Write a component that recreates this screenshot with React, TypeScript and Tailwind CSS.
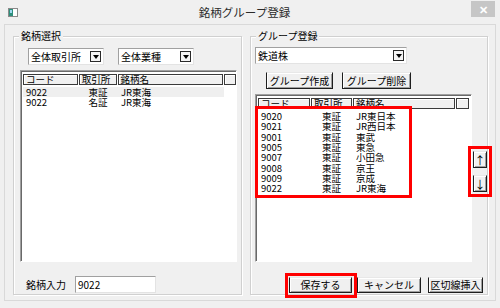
import type { ReactNode } from 'react'

// 銘柄グループ登録 dialog — classic Windows look: group boxes, sunken lists, 3D buttons.

type Row = { code: string; market: string; name: string }

const leftRows: Row[] = [
  { code: '9022', market: '東証', name: 'JR東海' },
  { code: '9022', market: '名証', name: 'JR東海' },
]

const groupRows: Row[] = [
  { code: '9020', market: '東証', name: 'JR東日本' },
  { code: '9021', market: '東証', name: 'JR西日本' },
  { code: '9001', market: '東証', name: '東武' },
  { code: '9005', market: '東証', name: '東急' },
  { code: '9007', market: '東証', name: '小田急' },
  { code: '9008', market: '東証', name: '京王' },
  { code: '9009', market: '東証', name: '京成' },
  { code: '9022', market: '東証', name: 'JR東海' },
]

function GroupBox({ label, className, children }: { label: string; className: string; children: ReactNode }) {
  return (
    <div className={`relative border border-[#d0d0d0] shadow-[inset_1px_1px_0_#fff,1px_1px_0_#fff] ${className}`}>
      <span className="absolute -top-[7px] left-[5px] bg-[#f0f0f0] px-[2px] text-[10px] leading-[12px] text-black">{label}</span>
      {children}
    </div>
  )
}

function Combo({ text, className }: { text: string; className: string }) {
  return (
    <div className={`shrink-0 h-[17px] bg-white border border-[#a0a0a0] border-b-[#e3e3e3] border-r-[#e3e3e3] flex items-center justify-between pl-[2px] pr-[2px] ${className}`}>
      <span className="text-[10px] leading-[12px] text-black">{text}</span>
      <span className="w-[11px] h-[11px] border border-[#2a2a2a] bg-[#f4f4f4] flex items-center justify-center">
        <span className="w-0 h-0 border-x-[3px] border-x-transparent border-t-[4px] border-t-black" />
      </span>
    </div>
  )
}

function WinButton({ children, className }: { children: ReactNode; className: string }) {
  return (
    <button className={`shrink-0 h-[16px] bg-[#f0f0f0] border border-[#1e1e1e] border-t-[#e8e8e8] shadow-[inset_1px_1px_0_#fff,inset_-1px_-1px_0_#a0a0a0] text-[10px] leading-[12px] text-black flex items-center justify-center ${className}`}>
      {children}
    </button>
  )
}

function HeaderCell({ text, className }: { text: string; className: string }) {
  return (
    <div className={`h-[11px] border border-[#3a3a3a] bg-[#f0f0f0] shadow-[inset_1px_1px_0_#fff] flex items-center pl-[2px] text-black ${className}`}>
      <span className="text-[9.5px] leading-[9px]">{text}</span>
    </div>
  )
}

function ListBox({ rows, widths, className, selected, children }: {
  rows: Row[]; widths: [string, string, string, string]; className: string; selected?: number; children?: ReactNode
}) {
  return (
    <div className={`relative bg-white border border-[#a0a0a0] border-b-white border-r-white shadow-[inset_1px_1px_0_#696969] pt-[3px] pl-[1px] ${className}`}>
      <div className="flex gap-[1px] pl-[1px]">
        <HeaderCell text="コード" className={widths[0]} />
        <HeaderCell text="取引所" className={widths[1]} />
        <HeaderCell text="銘柄名" className={widths[2]} />
        <HeaderCell text="" className={widths[3]} />
      </div>
      <div className="flex flex-col pt-[2px] pl-[1px]">
        {rows.map((r, i) => (
          <div key={i} className={`flex h-[10.3px] items-center text-[9.5px] leading-[10px] text-black w-fit ${i === selected ? 'bg-[#efefef]' : ''}`}>
            <span className={`${widths[0]} pl-[3px]`}>{r.code}</span>
            <span className={`${widths[1]} ml-[1px] text-center`}>{r.market}</span>
            <span className={`${widths[2]} ml-[1px] pl-[3px]`}>{r.name}</span>
          </div>
        ))}
      </div>
      {children}
    </div>
  )
}

function RedBox({ className }: { className: string }) {
  return <div className={`absolute border-[3px] border-[#ff0000] pointer-events-none ${className}`} />
}

export default function App() {
  return (
    <div className="w-[500px] h-[308px] bg-[#f0f0f0] flex flex-col overflow-hidden font-['Noto_Sans_CJK_JP',sans-serif] select-none">
      {/* title bar */}
      <div className="h-[24px] shrink-0 flex items-start relative">
        <svg className="mt-[8px] ml-[8px]" width="10" height="9" viewBox="0 0 10 9">
          <rect x="0.5" y="0.5" width="9" height="8" fill="#fff" stroke="#8a8a8a" />
          <rect x="1" y="1" width="4" height="7" fill="#2f8f7c" />
          <rect x="2" y="2" width="2" height="3" fill="#9fd7f0" />
        </svg>
        <div className="flex-1 text-center text-[11.5px] leading-[14px] mt-[5px] text-[#2a2a2a]">銘柄グループ登録</div>
        <div className="mt-[1px] mr-[5px] w-[24px] h-[16px] bg-[#c6c6c6] flex items-center justify-center text-white text-[11px] font-bold leading-none">✕</div>
      </div>

      {/* client frame */}
      <div className="mx-[4px] h-[277px] shrink-0 border border-[#d9d9d9] flex gap-[8px] pl-[8px] pt-[11px]">
        <GroupBox label="銘柄選択" className="w-[229px] h-[259px] flex flex-col pb-[1px]">
          <div className="flex gap-[14px] mt-[11px] ml-[14px] shrink-0">
            <Combo text="全体取引所" className="w-[76px]" />
            <Combo text="全体業種" className="w-[76px]" />
          </div>
          <ListBox rows={leftRows} selected={0} className="mt-[5px] ml-[6px] w-[217px] flex-1 min-h-0"
            widths={['w-[55px]', 'w-[38px]', 'w-[106px]', 'w-[12px]']} />
          <div className="flex items-center mt-[14px] ml-[12px] h-[17px] shrink-0">
            <span className="text-[10px] leading-[12px] w-[49px] text-black">銘柄入力</span>
            <div className="w-[81px] h-[17px] bg-white border border-[#a0a0a0] border-b-[#e3e3e3] border-r-[#e3e3e3] pl-[2px] text-[10px] leading-[15px] text-black">9022</div>
          </div>
        </GroupBox>

        <GroupBox label="グループ登録" className="w-[238px] h-[259px] flex flex-col">
          <Combo text="鉄道株" className="w-[152px] mt-[10px] ml-[4px]" />
          <div className="flex gap-[9px] mt-[8px] ml-[15px] shrink-0">
            <WinButton className="w-[67px] h-[17px]">グループ作成</WinButton>
            <WinButton className="w-[69px] h-[17px]">グループ削除</WinButton>
          </div>
          <div className="flex mt-[5px] ml-[4px] shrink-0">
            <ListBox rows={groupRows} className="w-[217px] h-[168px] shrink-0"
              widths={['w-[52px]', 'w-[41px]', 'w-[102px]', 'w-[13px]']}>
              <RedBox className="left-[-1px] top-[11px] w-[157px] h-[92px]" />
            </ListBox>
            <div className="relative flex flex-col gap-[7px] mt-[57px] ml-[1px]">
              <WinButton className="w-[14px] h-[17px] text-[11px]">↑</WinButton>
              <WinButton className="w-[14px] h-[17px] text-[11px]">↓</WinButton>
              <RedBox className="-left-[5px] -top-[5px] w-[24px] h-[51px]" />
            </div>
          </div>
          <div className="flex mt-[15px] ml-[38px] shrink-0">
            <div className="relative">
              <WinButton className="w-[63px]">保存する</WinButton>
              <RedBox className="-left-[4px] -top-[4px] -right-[5px] -bottom-[5px]" />
            </div>
            <WinButton className="w-[64px] ml-[5px]">キャンセル</WinButton>
            <WinButton className="w-[55px] ml-[7px]">区切線挿入</WinButton>
          </div>
        </GroupBox>
      </div>
    </div>
  )
}
